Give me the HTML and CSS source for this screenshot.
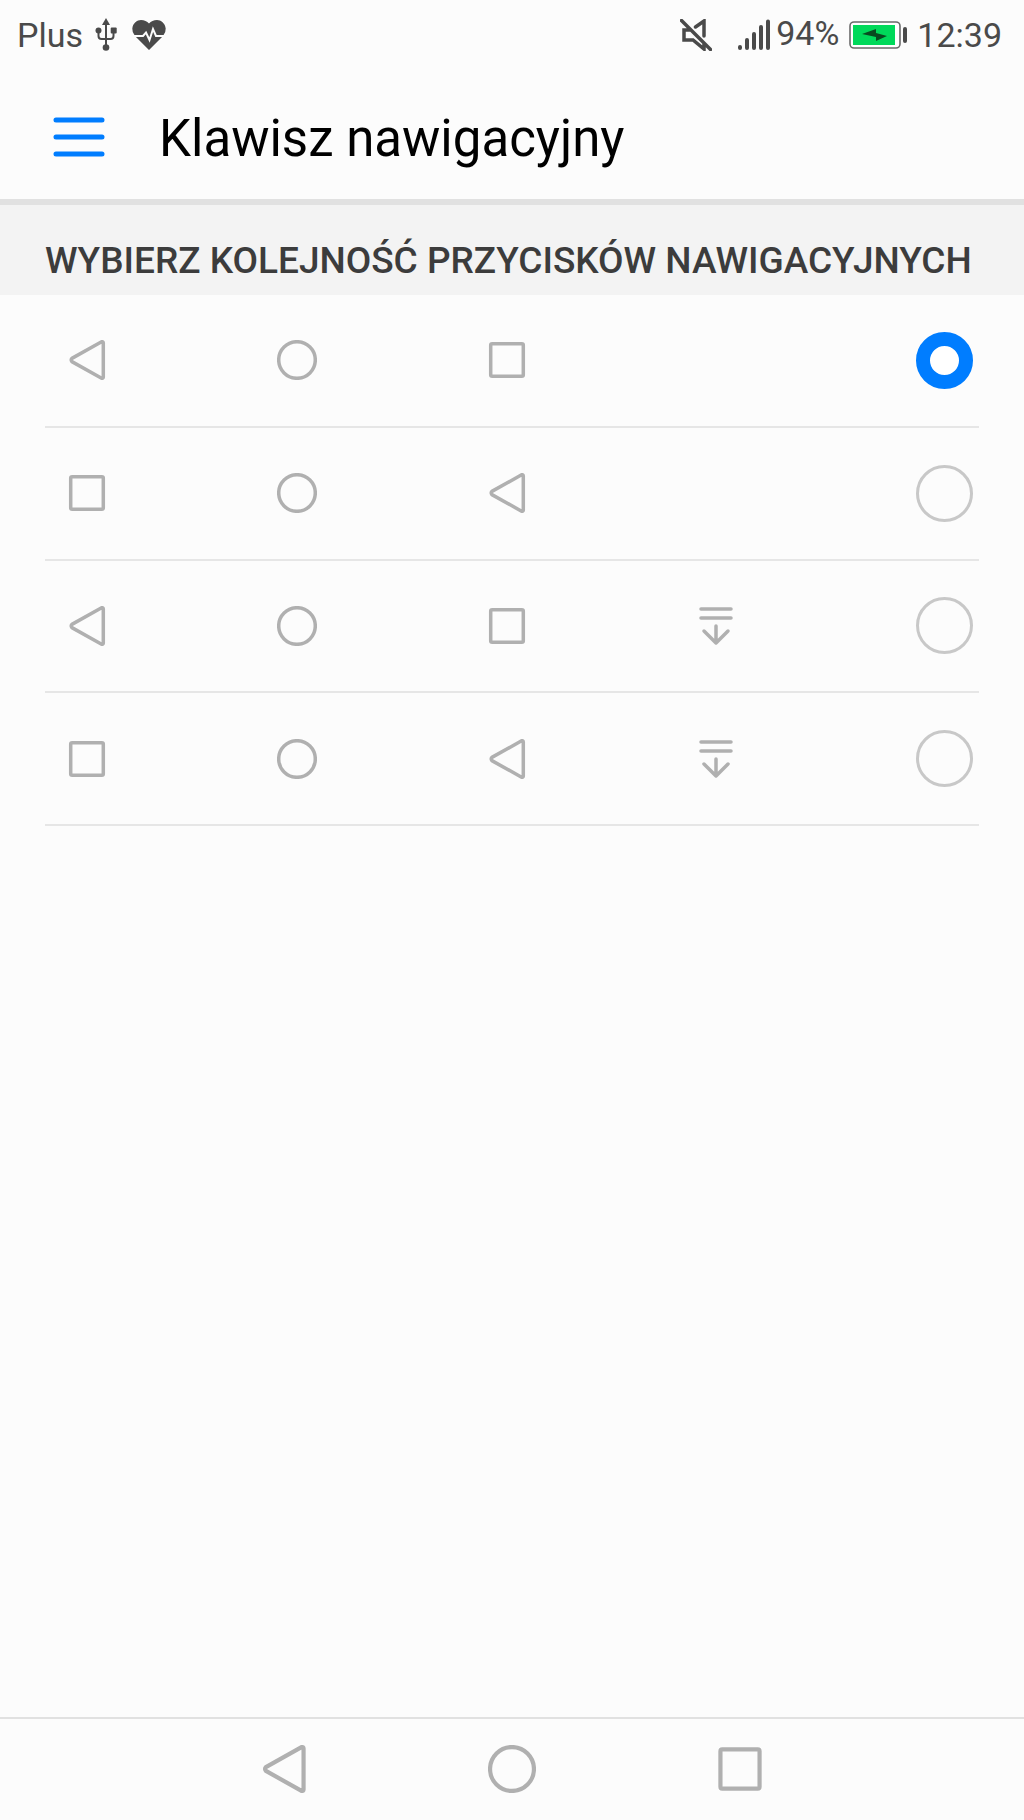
FILE: index.html
```html
<!DOCTYPE html>
<html lang="pl">
<head>
<meta charset="utf-8">
<meta name="viewport" content="width=device-width, initial-scale=1">
<title>Klawisz nawigacyjny</title>
<link rel="stylesheet" href="styles.css">
</head>
<body>
<svg class="sprite" aria-hidden="true">
  <symbol id="back" viewBox="0 0 40 40"><path d="M34.6 1.8 4.9 18.4Q3.6 20 4.9 21.6L34.6 38.2Q36.3 38.6 36.3 37V3Q36.3 1.4 34.6 1.8Z"/></symbol>
  <symbol id="home" viewBox="0 0 40 40"><circle cx="20" cy="20" r="18.3"/></symbol>
  <symbol id="recent" viewBox="0 0 40 40"><rect x="3.7" y="3.7" width="32.6" height="32.6" rx="1.5"/></symbol>
  <symbol id="shade" viewBox="0 0 40 40"><path d="M5 3H35M5 12H35M20 20V37M8 25 20 37 32 25"/></symbol>
</svg>
<div class="screen">
  <div class="status">
    <span>Plus</span>
    <svg class="usb" viewBox="0 0 22 34" aria-hidden="true">
      <path d="M11 5V29M3.500 13V18Q3.500 21 6.500 21H15.500Q18.500 21 18.500 18V13" fill="none" stroke="currentColor" stroke-width="2"/>
      <path d="M11 0 15 7H7Z"/><circle cx="3.500" cy="12.500" r="3"/><rect x="15.700" y="9.500" width="6" height="6" rx="1"/><circle cx="11" cy="29.500" r="3.300"/>
    </svg>
    <svg class="heart" viewBox="0 0 34 30" aria-hidden="true">
      <path d="M17 30 3 16Q0 12.500 0.300 8.500C1 3 5 0 9 0Q14 0 17 3.500Q20 0 25 0C29 0 33 3 33.700 8.500Q34 12.500 31 16Z"/>
      <path class="pulse" d="M0 16H11L14 12.500 17.500 20 21 9 24 16H34"/>
    </svg>
    <svg class="mute" viewBox="0 0 32 32" aria-hidden="true"><path d="M1.500 1.500 30.500 30.500M15.500 8 24 2V17M24 24V30L13 21H4V11H10"/></svg>
    <svg class="signal" viewBox="0 0 34 32" aria-hidden="true"><path d="M3 28V29M10 21V29M17 15V29M24 8V29M31 2.500V29"/></svg>
    <span class="percent">94%</span>
    <svg class="battery" viewBox="0 0 58 28" aria-hidden="true">
      <rect x="1" y="1" width="50" height="26" rx="4" fill="#fff" stroke="#6a6a6a" stroke-width="1.600"/>
      <rect x="4" y="4" width="42" height="20" fill="#00d95a"/>
      <path d="M13 13 27 8V12L38 15 27 20V16Z" fill="#084a20"/>
      <path d="M56 8V20" stroke="#4a4a4a" stroke-width="4" stroke-linecap="round"/>
    </svg>
    <span class="clock">12:39</span>
  </div>
  <header class="bar">
    <button class="menu" type="button" aria-label="Menu"><svg viewBox="0 0 52 40" aria-hidden="true"><path d="M3 3H49M3 20H49M3 37H49"/></svg></button>
    <h1>Klawisz nawigacyjny</h1>
  </header>
  <main>
    <h2 id="order">WYBIERZ KOLEJNOŚĆ PRZYCISKÓW NAWIGACYJNYCH</h2>
    <div class="options" role="radiogroup" aria-labelledby="order">
      <label class="option">
        <span class="keys"><svg><use href="#back"/></svg><svg><use href="#home"/></svg><svg><use href="#recent"/></svg></span>
        <input type="radio" name="order" aria-label="Wstecz, ekran główny, ostatnie" checked>
      </label>
      <label class="option">
        <span class="keys"><svg><use href="#recent"/></svg><svg><use href="#home"/></svg><svg><use href="#back"/></svg></span>
        <input type="radio" name="order" aria-label="Ostatnie, ekran główny, wstecz">
      </label>
      <label class="option">
        <span class="keys"><svg><use href="#back"/></svg><svg><use href="#home"/></svg><svg><use href="#recent"/></svg><svg><use href="#shade"/></svg></span>
        <input type="radio" name="order" aria-label="Wstecz, ekran główny, ostatnie, powiadomienia">
      </label>
      <label class="option">
        <span class="keys"><svg><use href="#recent"/></svg><svg><use href="#home"/></svg><svg><use href="#back"/></svg><svg><use href="#shade"/></svg></span>
        <input type="radio" name="order" aria-label="Ostatnie, ekran główny, wstecz, powiadomienia">
      </label>
    </div>
  </main>
  <nav class="softkeys">
    <button type="button" aria-label="Wstecz"><svg><use href="#back"/></svg></button>
    <button type="button" aria-label="Ekran główny"><svg><use href="#home"/></svg></button>
    <button type="button" aria-label="Ostatnie"><svg><use href="#recent"/></svg></button>
  </nav>
</div>
</body>
</html>
```
FILE: styles.css
```css
* { box-sizing: border-box; }
body {
  margin: 0;
  background: #fcfcfc;
  font-family: Roboto, "Liberation Sans", sans-serif;
}
svg { display: block; }
button { padding: 0; border: 0; background: none; }
.sprite { position: absolute; width: 0; height: 0; }
.screen { display: flex; flex-direction: column; min-height: 100vh; }

.status {
  display: flex;
  align-items: center;
  height: 70px;
  padding: 0 22px 0 17px;
  color: #4a4a4a;
  fill: currentColor;
  font-size: 34px;
  line-height: 40px;
}
.usb { width: 22px; height: 34px; margin-left: 12px; }
.heart { width: 34px; height: 30px; margin-left: 15px; }
.pulse { fill: none; stroke: #fcfcfc; stroke-width: 2; }
.mute { width: 32px; height: 32px; margin-left: auto; }
.signal { width: 34px; height: 32px; margin-left: 25px; }
.mute path, .signal path { fill: none; stroke: currentColor; stroke-width: 4; }
.mute path { stroke-width: 3.5px; stroke-linecap: round; }
.signal path { stroke-linecap: round; }
.percent { margin-left: 5px; padding-bottom: 4px; }
.battery { width: 58px; height: 28px; margin-left: 10px; }
.clock { margin-left: 10px; }

.bar {
  display: flex;
  align-items: center;
  gap: 54px;
  height: 135px;
  padding: 4px 53px 0;
  border-bottom: 6px solid #e1e1e1;
}
.menu svg { width: 52px; height: 40px; stroke: #007dff; stroke-width: 5; stroke-linecap: round; }
h1 { margin: 0; padding-top: 4px; font-size: 51px; font-weight: 400; line-height: 60px; color: #000; }
h2 {
  margin: 0;
  padding: 34px 45px 12px;
  background: #f3f3f3;
  color: #3c3c3c;
  font-size: 37px;
  font-weight: 500;
  line-height: 44px;
  white-space: nowrap;
}

main { flex: 1; }
.options { display: grid; grid-auto-rows: 1fr; min-height: 531px; padding: 0 45px; }
.option { display: flex; align-items: center; padding: 0 6px 0 22px; border-bottom: 2px solid #e6e6e6; }
.keys { flex: 1; display: grid; grid-template-columns: repeat(4, 1fr); margin-right: 10px; }
.keys svg { width: 40px; height: 40px; }
.keys svg, .softkeys svg { fill: none; stroke: #b0b0b0; stroke-width: 3.5px; stroke-linecap: round; stroke-linejoin: round; }
input {
  appearance: none;
  width: 57px;
  height: 57px;
  margin: 0;
  border: 3px solid #c8c8c8;
  border-radius: 50%;
}
input:checked { border: 14px solid #007dff; background: #fff; }

.softkeys {
  display: grid;
  grid-template-columns: repeat(3, 1fr);
  height: 103px;
  padding: 0 170px 2px;
  border-top: 2px solid #e1e1e1;
}
.softkeys button { display: grid; place-items: center; }
.softkeys svg { width: 48px; height: 48px; }
```
